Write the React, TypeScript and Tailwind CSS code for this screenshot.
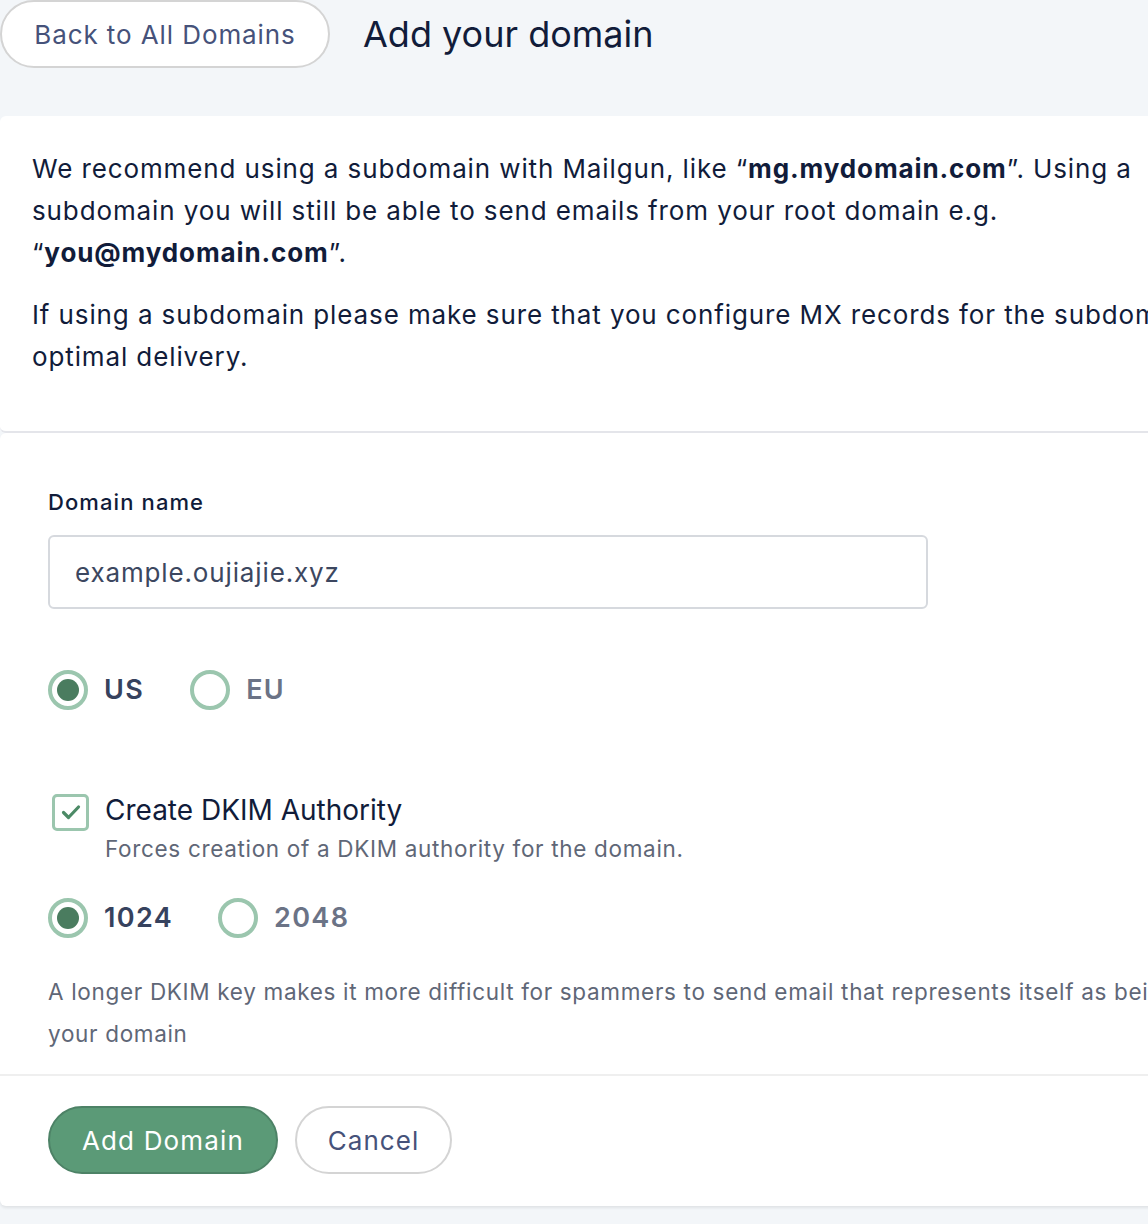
import { useState } from "react";

const Radio = ({
  label,
  checked,
  onClick,
}: {
  label: string;
  checked: boolean;
  onClick: () => void;
}) => (
  <button type="button" onClick={onClick} className="flex items-center gap-4">
    <span className="w-10 h-10 rounded-full border-4 border-[#9bc6ae] flex items-center justify-center bg-white">
      {checked && <span className="w-[22px] h-[22px] rounded-full bg-[#4a7c5f]" />}
    </span>
    <span
      className={
        checked
          ? "text-[27px] tracking-[0.05em] font-semibold text-[#36425e]"
          : "text-[27px] tracking-[0.05em] font-semibold text-[#6b7386]"
      }
    >
      {label}
    </span>
  </button>
);

export default function App() {
  const [region, setRegion] = useState("US");
  const [keySize, setKeySize] = useState("1024");
  const [dkim, setDkim] = useState(true);

  return (
    <div className="min-h-[1224px] w-[1148px] overflow-hidden bg-[#f3f6f9] font-['Inter',sans-serif] text-[#111c3a]">
      <div className="flex items-center h-[68px] gap-[33px] mb-[48px]">
        <button className="h-[68px] w-[330px] rounded-full border-2 border-[#d4d4d4] bg-white text-[26px] tracking-[0.035em] text-[#46527a]">
          Back to All Domains
        </button>
        <h1 className="text-[36px] text-[#111c3a] leading-none">Add your domain</h1>
      </div>

      <div className="w-[1180px] bg-white rounded-md border-b-2 border-[#e4e5ea] pt-[32px] pb-[53px] pl-[32px] text-[26px] leading-[42px] tracking-[0.034em]">
        <p>
          We recommend using a subdomain with Mailgun, like “<b className="font-bold">mg.mydomain.com</b>”. Using a
          subdomain you will still be able to send emails from your root domain e.g.
          <br />“<b className="font-bold">you@mydomain.com</b>”.
        </p>
        <p className="mt-[20px] whitespace-nowrap">
          If using a subdomain please make sure that you configure MX records for the subdomain for
          <br />
          optimal delivery.
        </p>
      </div>

      <div className="w-[1180px] bg-white rounded-md shadow-[0_2px_3px_rgba(0,0,0,0.08)]">
        <div className="pl-[48px] pt-[55px] pb-[19px]">
          <label className="block text-[22px] font-medium tracking-[0.05em] text-[#111c3a] leading-[28px]">Domain name</label>
          <input
            readOnly
            value="example.oujiajie.xyz"
            className="mt-[19px] w-[880px] h-[74px] rounded-md border-2 border-[#d6d9de] px-[25px] text-[26px] tracking-[0.033em] text-[#3c4760] outline-none"
          />
          <div className="flex gap-[46px] mt-[61px]">
            <Radio label="US" checked={region === "US"} onClick={() => setRegion("US")} />
            <Radio label="EU" checked={region === "EU"} onClick={() => setRegion("EU")} />
          </div>

          <div className="mt-[80px] flex gap-[16px]">
            <button
              type="button"
              onClick={() => setDkim(!dkim)}
              className="mt-[3px] ml-[4px] w-[37px] h-[37px] rounded-[5px] border-[3px] border-[#9bc6ae] flex items-center justify-center"
            >
              {dkim && (
                <svg width="22" height="18" viewBox="0 0 22 18" fill="none">
                  <path d="M3.5 9.5l5 5L18.5 4" stroke="#4c8a66" strokeWidth="3.2" strokeLinecap="round" strokeLinejoin="round" />
                </svg>
              )}
            </button>
            <div>
              <div className="text-[28px] leading-[38px] text-[#111c3a]">Create DKIM Authority</div>
              <div className="text-[22.5px] leading-[40px] tracking-[0.03em] text-[#5f6777]">Forces creation of a DKIM authority for the domain.</div>
            </div>
          </div>

          <div className="flex gap-[45px] mt-[29px]">
            <Radio label="1024" checked={keySize === "1024"} onClick={() => setKeySize("1024")} />
            <Radio label="2048" checked={keySize === "2048"} onClick={() => setKeySize("2048")} />
          </div>

          <p className="mt-[33px] text-[22.5px] leading-[42px] tracking-[0.03em] text-[#5f6777] whitespace-nowrap">
            A longer DKIM key makes it more difficult for spammers to send email that represents itself as being from
            <br />
            your domain
          </p>
        </div>
        <div className="border-t-2 border-[#efefef] pl-[48px] pt-[30px] pb-[32px] flex gap-[17px]">
          <button className="h-[68px] w-[230px] rounded-full bg-[#5b9a77] border-2 border-[#4d8266] text-white text-[26px] tracking-[0.045em]">
            Add Domain
          </button>
          <button className="h-[68px] w-[157px] rounded-full bg-white border-2 border-[#d4d4d4] text-[#46527a] text-[26px] tracking-[0.04em]">
            Cancel
          </button>
        </div>
      </div>
    </div>
  );
}
